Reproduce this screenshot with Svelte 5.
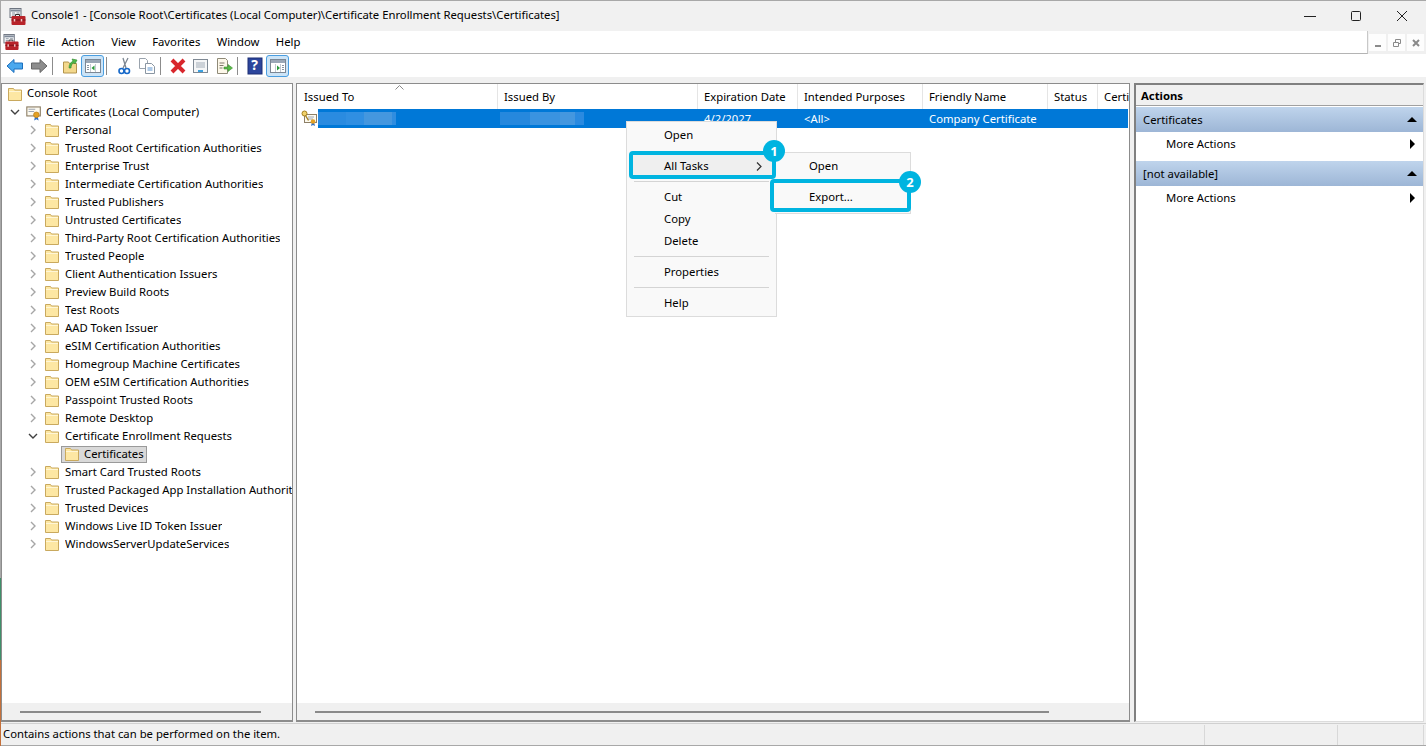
<script>
    const menus = ["File", "Action", "View", "Favorites", "Window", "Help"];

    const stores = [
        "Personal",
        "Trusted Root Certification Authorities",
        "Enterprise Trust",
        "Intermediate Certification Authorities",
        "Trusted Publishers",
        "Untrusted Certificates",
        "Third-Party Root Certification Authorities",
        "Trusted People",
        "Client Authentication Issuers",
        "Preview Build Roots",
        "Test Roots",
        "AAD Token Issuer",
        "eSIM Certification Authorities",
        "Homegroup Machine Certificates",
        "OEM eSIM Certification Authorities",
        "Passpoint Trusted Roots",
        "Remote Desktop",
        "Certificate Enrollment Requests",
        "Smart Card Trusted Roots",
        "Trusted Packaged App Installation Authorit",
        "Trusted Devices",
        "Windows Live ID Token Issuer",
        "WindowsServerUpdateServices"
    ];

    const columns = ["Issued To", "Issued By", "Expiration Date", "Intended Purposes", "Friendly Name", "Status", "Certi"];
</script>

{#snippet folder()}
    <svg class="folder" width="16" height="16" viewBox="0 0 16 16">
        <path d="M1.5 14.5V2.5h5l1 1.5h7v10.5z" fill="#fde7a3" stroke="#c9a95e" />
        <path d="M2 5.5h12" stroke="#fff6d6" />
    </svg>
{/snippet}

{#snippet toolbox(size)}
    <svg width={size} height={size} viewBox="0 0 16 17">
        <rect x="0.5" y="0.5" width="11" height="9" fill="#f4f6f8" stroke="#6d7480" />
        <path d="M1 2.5h10" stroke="#7f8a99" stroke-width="2" />
        <path d="M2.5 5h3M2.5 7h3M7 5h3" stroke="#8b94a0" />
        <path d="M6 8V6.5h4V8" fill="none" stroke="#333" />
        <rect x="2" y="8" width="14" height="9" rx="1" fill="#b8232a" />
        <path d="M2 12h14" stroke="#7d1218" />
        <path d="M5 11v2.5M12 11v2.5" stroke="#f3c9c9" stroke-width="1.5" />
    </svg>
{/snippet}

{#snippet pane(flip)}
    <svg width="18" height="18" viewBox="0 0 18 18">
        <rect x="1.5" y="2.5" width="15" height="13" fill="#fff" stroke="#7c8794" />
        <path d="M2 4.5h14" stroke="#9aa7b6" stroke-width="3" />
        <path d="M6.500 7v8M11.500 7v8" stroke="#c2c9d1" />
        {#if flip}
            <path d="M8 8.500v5l3-2.500z" fill="#2b9a3c" />
            <path d="M13 8.500h2M13 10.500h2M13 12.500h2" stroke="#8a96a3" />
        {:else}
            <path d="M10.500 8.500v5l-3-2.500z" fill="#2b9a3c" />
            <path d="M3 8.500h2M3 10.500h2M3 12.500h2" stroke="#8a96a3" />
        {/if}
    </svg>
{/snippet}

{#snippet certificate(size)}
    <svg class="cert" width={size} height={size} viewBox="0 0 16 16">
        <rect x="2.500" y="3.500" width="12" height="8" fill="#fdfaf0" stroke="#8d7f66" />
        <path d="M4 5.500h6M4 7.500h5" stroke="#9ea7b3" />
        <path d="M10 11l-1 4.500 2-1 2 1-1-4.500z" fill="#2f6fc4" />
        <circle cx="11" cy="10.500" r="2.500" fill="#e3a124" stroke="#b97a13" stroke-width="0.6" />
    </svg>
{/snippet}

{#snippet chevron(open)}
    <svg class="chevron" width="10" height="10" viewBox="0 0 10 10">
        {#if open}
            <path d="M1 3l4 4 4-4" fill="none" stroke="#404040" stroke-width="1.400" />
        {:else}
            <path d="M3 1l4 4-4 4" fill="none" stroke="#a6a6a6" stroke-width="1.400" />
        {/if}
    </svg>
{/snippet}

<div class="window">
    <div class="titlebar">
        <span class="title-icon">{@render toolbox(17)}</span>
        <span class="title">Console1 - [Console Root\Certificates (Local Computer)\Certificate Enrollment Requests\Certificates]</span>
        <div class="caption">
            <svg width="12" height="12" viewBox="0 0 12 12"><path d="M0 6.500h12" stroke="#222" /></svg>
            <svg width="12" height="12" viewBox="0 0 12 12"><rect x="1.500" y="1.500" width="9" height="9" rx="1" fill="none" stroke="#222" /></svg>
            <svg width="12" height="12" viewBox="0 0 12 12"><path d="M1 1l10 10M11 1L1 11" stroke="#222" /></svg>
        </div>
    </div>

    <div class="menubar">
        <div class="menus">
            <span class="menu-icon">{@render toolbox(16)}</span>
            {#each menus as m}
                <span class="menu-item">{m}</span>
            {/each}
        </div>
        <div class="mdi">
            <span class="mdi-btn"><svg width="10" height="10" viewBox="0 0 10 10"><path d="M2 8h6" stroke="#8a8a8a" stroke-width="2" /></svg></span>
            <span class="mdi-btn"><svg width="10" height="10" viewBox="0 0 10 10"><path d="M1.500 4.500h5v4h-5zM3.500 4V1.500h5v4H7" fill="none" stroke="#8a8a8a" /></svg></span>
            <span class="mdi-btn"><svg width="10" height="10" viewBox="0 0 10 10"><path d="M2 2l6 6M8 2L2 8" stroke="#8a8a8a" stroke-width="2" /></svg></span>
        </div>
    </div>

    <div class="toolbar">
        <span class="tool first">
            <svg width="18" height="18" viewBox="0 0 18 18"><path d="M1 9l7-6.500V6h8.500v6H8v3.500z" fill="#4aa8ee" stroke="#1c6fbd" /></svg>
        </span>
        <span class="tool">
            <svg width="18" height="18" viewBox="0 0 18 18"><path d="M17 9l-7-6.500V6H1.500v6H10v3.500z" fill="#8d8d8d" stroke="#666" /></svg>
        </span>
        <span class="sep"></span>
        <span class="tool">
            <svg width="18" height="18" viewBox="0 0 18 18">
                <path d="M2.500 16V5h5l1 1.500h7V16z" fill="#f3d88c" stroke="#b3944c" />
                <path d="M8 11c0-4 2-6 4-7l-1-2 5 1-2 4-1-1.500c-2 1-3 3-3 5.500z" fill="#4fb848" stroke="#2e8a2b" stroke-width="0.600" />
            </svg>
        </span>
        <span class="tool on">{@render pane(false)}</span>
        <span class="sep"></span>
        <span class="tool">
            <svg width="18" height="18" viewBox="0 0 18 18">
                <path d="M13 1L8 11M8 1l3 10" stroke="#7d8792" stroke-width="1.300" fill="none" />
                <circle cx="6.500" cy="14" r="2.500" fill="none" stroke="#1668c9" stroke-width="1.600" />
                <circle cx="12" cy="14" r="2.500" fill="none" stroke="#1668c9" stroke-width="1.600" />
            </svg>
        </span>
        <span class="tool">
            <svg width="18" height="18" viewBox="0 0 18 18">
                <path d="M1.500 1.500h6l2 2v8h-8z" fill="#fff" stroke="#9aa3ad" />
                <path d="M7.500 6.500h6l3 3v7h-9z" fill="#fff" stroke="#8a96a3" />
                <path d="M9.500 11h5M9.500 13h5" stroke="#5b93cf" />
            </svg>
        </span>
        <span class="sep"></span>
        <span class="tool">
            <svg width="18" height="18" viewBox="0 0 18 18"><path d="M3 3l12 12M15 3L3 15" stroke="#d8262c" stroke-width="4" /></svg>
        </span>
        <span class="tool">
            <svg width="18" height="18" viewBox="0 0 18 18">
                <rect x="1.500" y="2.500" width="14" height="13" fill="#f5f6f7" stroke="#7f8994" />
                <path d="M4 6h9M4 8h9M4 10h9" stroke="#a3adb8" />
                <path d="M6 14h5" stroke="#3aa0e0" stroke-width="2" />
            </svg>
        </span>
        <span class="tool">
            <svg width="18" height="18" viewBox="0 0 18 18">
                <path d="M2.500 1.500h8l2 2v13h-10z" fill="#fdf8ea" stroke="#8f8a78" />
                <path d="M4.500 6h5M4.500 8.500h4M4.500 11h3" stroke="#80786a" />
                <path d="M9 10h4V7.500l4.500 3.500-4.500 3.500V12H9z" fill="#58b947" stroke="#3d8f31" stroke-width="0.600" />
            </svg>
        </span>
        <span class="sep"></span>
        <span class="tool">
            <svg class="help-icon" width="18" height="18" viewBox="0 0 18 18">
                <rect x="2" y="1" width="14" height="16" fill="#2c459c" stroke="#1d2f75" />
            </svg>
            <b class="help-mark">?</b>
        </span>
        <span class="tool on">{@render pane(true)}</span>
    </div>

    <div class="panes">
        <div class="tree">
            <div class="tree-list">
                <div class="node root">{@render folder()}<span>Console Root</span></div>
                <div class="node computer">
                    {@render chevron(true)}
                    {@render certificate(18)}
                    <span>Certificates (Local Computer)</span>
                </div>
                {#each stores as s}
                    <div class="node store">
                        {@render chevron(s === "Certificate Enrollment Requests")}
                        {@render folder()}
                        <span class="clip">{s}</span>
                    </div>
                    {#if s === "Certificate Enrollment Requests"}
                        <div class="node leaf">
                            <span class="selected">{@render folder()}<span>Certificates</span></span>
                        </div>
                    {/if}
                {/each}
            </div>
            <div class="hscroll"><span class="thumb left-thumb"></span></div>
        </div>

        <div class="list">
            <div class="list-head">
                {#each columns as c}
                    <span class="col">{c}</span>
                {/each}
                <svg class="sort" width="9" height="5" viewBox="0 0 9 5"><path d="M0.500 4.500l4-4 4 4" fill="none" stroke="#8a8a8a" /></svg>
            </div>
            <div class="row">
                <span class="row-icon">
                    <svg width="17" height="17" viewBox="0 0 17 17">
                        <rect x="3.500" y="4.500" width="12" height="8" fill="#fdfaf0" stroke="#8d7f66" />
                        <path d="M7 7h6M7 9h5" stroke="#9ea7b3" />
                        <path d="M11 12l-1 4 2-1 2 1-1-4z" fill="#2f6fc4" />
                        <circle cx="12" cy="11.500" r="2.300" fill="#e3a124" />
                        <circle cx="3.500" cy="3.500" r="2.500" fill="#f2d36b" stroke="#a5801f" />
                        <path d="M4.500 5.500l3 5" stroke="#a5801f" stroke-width="1.400" />
                    </svg>
                </span>
                <div class="cells">
                    <span class="cell"><i class="blur to"></i></span>
                    <span class="cell"><i class="blur by"></i></span>
                    <span class="cell">4/2/2027</span>
                    <span class="cell">&lt;All&gt;</span>
                    <span class="cell">Company Certificate</span>
                    <span class="cell"></span>
                    <span class="cell"></span>
                </div>
            </div>
            <div class="list-body"></div>
            <div class="hscroll"><span class="thumb list-thumb"></span></div>
        </div>

        <div class="actions">
            <div class="actions-head">Actions</div>
            <div class="group">Certificates<span class="up"></span></div>
            <div class="action">More Actions<span class="more"></span></div>
            <div class="group">[not available]<span class="up"></span></div>
            <div class="action">More Actions<span class="more"></span></div>
        </div>
    </div>

    <div class="statusbar">
        <span class="status-main">Contains actions that can be performed on the item.</span>
        <span class="status-a"></span>
        <span class="status-b"></span>
    </div>

    <div class="context">
        <div class="mi">Open</div>
        <div class="gap"></div>
        <div class="mi">All Tasks<svg class="arrow" width="7" height="9" viewBox="0 0 7 9"><path d="M1 0.500l4 4-4 4" fill="none" stroke="#333" stroke-width="1.200" /></svg></div>
        <div class="ms"></div>
        <div class="mi">Cut</div>
        <div class="mi">Copy</div>
        <div class="mi">Delete</div>
        <div class="ms"></div>
        <div class="mi">Properties</div>
        <div class="ms"></div>
        <div class="mi">Help</div>
    </div>

    <div class="submenu">
        <div class="mi">Open</div>
        <div class="gap"></div>
        <div class="mi">Export...</div>
    </div>

    <div class="mark mark-one"></div>
    <div class="mark mark-two"></div>
    <div class="badge badge-one">1</div>
    <div class="badge badge-two">2</div>
</div>

<style>
    :global(body) {
        margin: 0;
        background: linear-gradient(to bottom, #a8a8a8 578px, #3f8f6a 578px, #3f8f6a 660px, #c4703a 660px);
    }

    .window {
        position: relative;
        margin-left: 1px;
        overflow: hidden;
        display: flex;
        flex-direction: column;
        background: #f0f0f0;
        border-top: 1px solid #a8a8a8;
        border-bottom: 1px solid #a8a8a8;
        box-sizing: border-box;
        height: 746px;
        font-family: "Noto Sans", sans-serif;
        font-size: 11.3px;
        color: #000;
    }

    .titlebar {
        height: 30px;
        flex: none;
        display: flex;
        align-items: center;
        padding-left: 8px;
        background: #f1f1f1;
    }

    .title-icon {
        display: flex;
        margin-right: 5px;
    }

    .title {
        padding-bottom: 3px;
    }

    .caption {
        margin-left: auto;
        display: flex;
        gap: 34px;
        padding-right: 18px;
    }

    .caption svg {
        display: block;
    }

    .menubar {
        height: 23px;
        flex: none;
        display: flex;
    }

    .menus {
        flex: 1;
        display: flex;
        align-items: center;
        background: #fff;
        border-bottom: 1px solid #b4b4b4;
        border-right: 1px solid #c8c8c8;
        padding-left: 2px;
    }

    .menu-icon {
        display: flex;
        margin-right: 8px;
    }

    .menu-item {
        margin-right: 16.3px;
        padding-bottom: 2px;
    }

    .mdi {
        width: 57px;
        display: flex;
        align-items: center;
        gap: 2px;
        padding-left: 1px;
        background: #f0f0f0;
    }

    .mdi-btn {
        width: 17px;
        height: 17px;
        display: flex;
        align-items: center;
        justify-content: center;
        background: #fdfdfd;
    }

    .toolbar {
        height: 23px;
        flex: none;
        display: flex;
        align-items: center;
        padding-left: 2px;
        background: #fff;
    }

    .tool {
        position: relative;
        width: 23px;
        height: 22px;
        box-sizing: border-box;
        display: flex;
        align-items: center;
        justify-content: center;
    }

    .tool.first {
        width: 24px;
    }

    .tool.on {
        background: #cce4f7;
        border: 1px solid #4a9ee0;
        border-radius: 3px;
    }

    .sep {
        width: 1px;
        height: 18px;
        margin: 0 5px 0 2px;
        background: #8c8c8c;
    }

    .help-mark {
        position: absolute;
        left: 0;
        right: 0;
        top: 1px;
        text-align: center;
        color: #fff;
        font-size: 14px;
        line-height: 18px;
    }

    .panes {
        flex: 1;
        min-height: 0;
        display: flex;
        padding: 6px 2px 1px 0;
        gap: 3px;
    }

    .tree {
        width: 290px;
        flex: none;
        display: flex;
        flex-direction: column;
        background: #fff;
        border: 1px solid #8c8c8c;
        border-bottom-width: 2px;
    }

    .tree-list {
        flex: 1;
        overflow: hidden;
    }

    .folder, .chevron, .cert {
        flex: none;
    }

    .node {
        height: 18px;
        display: flex;
        align-items: center;
        white-space: nowrap;
    }

    .node span {
        padding-bottom: 2px;
    }

    .root {
        padding-left: 5px;
        gap: 4px;
        height: 19px;
    }

    .computer {
        padding-left: 8px;
        gap: 4px;
    }

    .store {
        padding-left: 26px;
        gap: 6px;
    }

    .store .clip {
        margin-left: -1px;
    }

    .leaf {
        padding-left: 59px;
    }

    .clip {
        overflow: hidden;
    }

    .node .selected {
        display: flex;
        align-items: center;
        gap: 4px;
        height: 15px;
        padding: 0 2px;
        background: #d9d9d9;
        border: 1px solid #9a9a9a;
    }

    .hscroll {
        height: 17px;
        flex: none;
        display: flex;
        align-items: center;
        background: #f0f0f0;
    }

    .thumb {
        display: block;
        height: 2px;
        background: #8a8a8a;
    }

    .left-thumb {
        width: 241px;
        margin-left: 18px;
    }

    .list-thumb {
        width: 734px;
        margin-left: 18px;
    }

    .list {
        flex: 1;
        min-width: 0;
        display: flex;
        flex-direction: column;
        position: relative;
        background: #fff;
        border: 1px solid #8c8c8c;
        border-bottom-width: 2px;
    }

    .list-head {
        height: 25px;
        flex: none;
        display: grid;
        grid-template-columns: 201px 200px 100px 125px 125px 50px 1fr;
        align-items: stretch;
        position: relative;
    }

    .col {
        display: flex;
        align-items: center;
        padding: 0 0 1px 6px;
        border-right: 1px solid #e5e5e5;
        overflow: hidden;
        white-space: nowrap;
    }

    .col:first-child {
        padding-left: 7px;
    }

    .col:last-of-type {
        border-right: 0;
    }

    .sort {
        position: absolute;
        left: 98px;
        top: 1px;
    }

    .row {
        height: 19px;
        flex: none;
        display: flex;
        position: relative;
        padding-left: 21px;
    }

    .row-icon {
        position: absolute;
        left: 4px;
        top: 1px;
    }

    .cells {
        flex: 1;
        margin-right: 1px;
        display: grid;
        grid-template-columns: 179px 200px 100px 125px 125px 50px 1fr;
        align-items: center;
        background: #0078d7;
        color: #fff;
    }

    .cell {
        padding-left: 7px;
        white-space: nowrap;
        overflow: hidden;
    }

    .blur {
        display: block;
        height: 15px;
        margin-top: -2px;
    }

    .blur.to {
        width: 78px;
        margin-left: -7px;
        background: linear-gradient(to right, #2a8be0 0 28px, #308fe2 28px 46px, #4497df 46px 74px, #2f8de0 74px);
    }

    .blur.by {
        width: 84px;
        margin-left: -4px;
        background: linear-gradient(to right, #2688dd 0 30px, #3a93e0 30px 60px, #4497df 60px 75px, #2a8ae0 75px);
    }

    .list-body {
        flex: 1;
    }

    .actions {
        width: 287px;
        flex: none;
        margin-left: 1px;
        background: #fff;
        border-left: 2px solid #808080;
        border-top: 2px solid #808080;
        border-right: 1px solid #dcdcdc;
        border-bottom: 1px solid #dcdcdc;
    }

    .actions-head {
        height: 20px;
        display: flex;
        align-items: center;
        padding-left: 5px;
        font-weight: 700;
        background: #f0f0f0;
        border-bottom: 1px solid #a0a0a0;
        margin-bottom: 1px;
    }

    .group {
        height: 25px;
        box-sizing: border-box;
        display: flex;
        align-items: center;
        padding: 0 0 1px 7px;
        background: linear-gradient(to bottom, #bfd4ec, #9db6d6);
        position: relative;
    }

    .up {
        position: absolute;
        right: 6px;
        top: 10px;
        border-left: 5px solid transparent;
        border-right: 5px solid transparent;
        border-bottom: 5px solid #000;
    }

    .action {
        height: 29px;
        display: flex;
        align-items: flex-start;
        padding: 4px 0 0 30px;
        box-sizing: border-box;
        position: relative;
    }

    .more {
        position: absolute;
        right: 8px;
        top: 7px;
        border-top: 5px solid transparent;
        border-bottom: 5px solid transparent;
        border-left: 5px solid #000;
    }

    .statusbar {
        height: 22px;
        flex: none;
        display: flex;
        align-items: center;
        border-top: 1px solid #d0d0d0;
        box-sizing: border-box;
        padding-left: 2px;
    }

    .status-main {
        flex: 1;
        padding-bottom: 2px;
    }

    .status-a {
        width: 132px;
        height: 20px;
        border-left: 1px solid #d8d8d8;
    }

    .status-b {
        width: 85px;
        height: 20px;
        border-left: 1px solid #d8d8d8;
        border-right: 1px solid #d8d8d8;
        margin-right: 2px;
    }

    .context {
        position: absolute;
        left: 625px;
        top: 120px;
        width: 149px;
        padding: 2px 0;
        background: #f9f9f9;
        border: 1px solid #dcdcdc;
    }

    .submenu {
        position: absolute;
        left: 774px;
        top: 151px;
        width: 135px;
        height: 58px;
        padding-top: 2px;
        background: #f9f9f9;
        border: 1px solid #dcdcdc;
        border-left: 0;
    }

    .mi {
        height: 22px;
        box-sizing: border-box;
        display: flex;
        align-items: center;
        padding: 0 0 2px 37px;
        position: relative;
    }

    .submenu .mi {
        padding-left: 34px;
    }

    .gap {
        height: 9px;
    }

    .ms {
        height: 1px;
        margin: 4px 7px;
        background: #d4d4d4;
    }

    .arrow {
        position: absolute;
        left: 129px;
        top: 7px;
    }

    .mark {
        position: absolute;
        box-sizing: border-box;
        border: 4px solid #00b4e0;
        border-radius: 4px;
    }

    .mark-one {
        left: 628px;
        top: 150px;
        width: 147px;
        height: 28px;
        background: rgba(0, 0, 0, 0.04);
    }

    .mark-two {
        left: 769px;
        top: 178px;
        width: 141px;
        height: 33px;
    }

    .badge {
        position: absolute;
        width: 22px;
        height: 22px;
        border-radius: 50%;
        background: #00b4e0;
        color: #fff;
        font-weight: 700;
        font-size: 13px;
        line-height: 22px;
        text-align: center;
    }

    .badge-one {
        left: 762px;
        top: 139px;
    }

    .badge-two {
        left: 898px;
        top: 170px;
    }
</style>
